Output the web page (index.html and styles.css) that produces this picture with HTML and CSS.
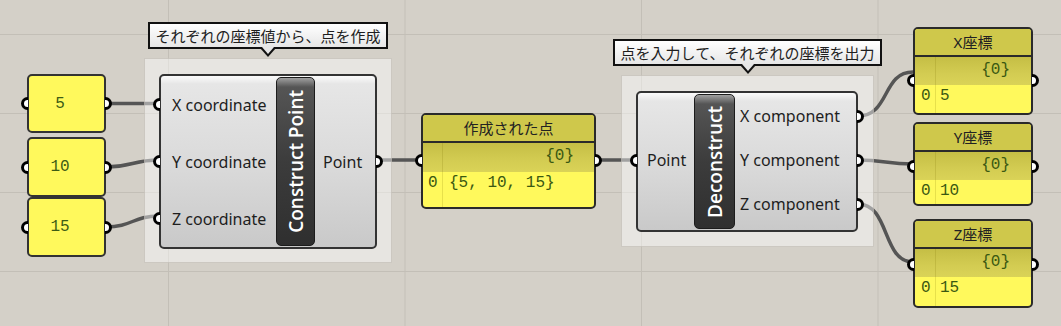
FILE: index.html
```html
<!DOCTYPE html>
<html lang="ja">
<head>
<meta charset="UTF-8">
<title>Construct / Deconstruct Point</title>
<link rel="stylesheet" href="styles.css">
</head>
<body>
<div class="canvas">

  <!-- wires -->
  <svg class="wires" width="1061" height="326" viewBox="0 0 1061 326">
    <g fill="none" stroke="#555" stroke-width="3.5">
      <path d="M106 103.5 C130 103.5, 135 103.5, 159 103.5"/>
      <path d="M106 167 C132 167, 133 160, 159 160"/>
      <path d="M106 227 C132 227, 133 216, 159 216"/>
      <path d="M377 160 L421 160"/>
      <path d="M596 160 L636 160"/>
      <path d="M858 116 C890 116, 882 72, 913 72"/>
      <path d="M858 160 C885 160, 886 164, 913 164"/>
      <path d="M858 204 C890 204, 882 262, 913 262"/>
    </g>
  </svg>

  <!-- number inputs -->
  <div class="node num n5"><span class="grip in"></span>5<span class="grip out"></span></div>
  <div class="node num n10"><span class="grip in"></span>10<span class="grip out"></span></div>
  <div class="node num n15"><span class="grip in"></span>15<span class="grip out"></span></div>

  <!-- construct point -->
  <div class="node group g1"></div>
  <div class="node tip t1">それぞれの座標値から、点を作成</div>
  <div class="node comp cpt">
    <div class="ports ins">
      <div class="port"><span class="grip in"></span>X coordinate</div>
      <div class="port"><span class="grip in"></span>Y coordinate</div>
      <div class="port"><span class="grip in"></span>Z coordinate</div>
    </div>
    <div class="strip"><span>Construct Point</span></div>
    <div class="ports outs">
      <div class="port">Point<span class="grip out"></span></div>
    </div>
  </div>

  <!-- result panel -->
  <div class="node panel pmain">
    <span class="grip in"></span>
    <div class="panel-title">作成された点</div>
    <div class="panel-head"><span class="idx"></span><span class="path">{0}</span></div>
    <div class="panel-row"><span class="idx">0</span><span class="val">{5, 10, 15}</span></div>
    <span class="grip out"></span>
  </div>

  <!-- deconstruct -->
  <div class="node group g2"></div>
  <div class="node tip t2">点を入力して、それぞれの座標を出力</div>
  <div class="node comp dec">
    <div class="ports ins">
      <div class="port"><span class="grip in"></span>Point</div>
    </div>
    <div class="strip"><span>Deconstruct</span></div>
    <div class="ports outs">
      <div class="port">X component<span class="grip out"></span></div>
      <div class="port">Y component<span class="grip out"></span></div>
      <div class="port">Z component<span class="grip out"></span></div>
    </div>
  </div>

  <!-- coordinate panels -->
  <div class="node panel small px">
    <span class="grip in"></span>
    <div class="panel-title">X座標</div>
    <div class="panel-head"><span class="idx"></span><span class="path">{0}</span></div>
    <div class="panel-row"><span class="idx">0</span><span class="val">5</span></div>
    <span class="grip out"></span>
  </div>
  <div class="node panel small py">
    <span class="grip in"></span>
    <div class="panel-title">Y座標</div>
    <div class="panel-head"><span class="idx"></span><span class="path">{0}</span></div>
    <div class="panel-row"><span class="idx">0</span><span class="val">10</span></div>
    <span class="grip out"></span>
  </div>
  <div class="node panel small pz">
    <span class="grip in"></span>
    <div class="panel-title">Z座標</div>
    <div class="panel-head"><span class="idx"></span><span class="path">{0}</span></div>
    <div class="panel-row"><span class="idx">0</span><span class="val">15</span></div>
    <span class="grip out"></span>
  </div>

</div>
</body>
</html>
```

FILE: styles.css
```css
body { margin: 0; font-family: "Noto Sans", "Noto Sans CJK JP", sans-serif; }

.canvas {
  position: relative; width: 1061px; height: 326px; overflow: hidden;
  background-color: #d4d0c8;
  background-image: linear-gradient(to right, #c3bfb7 1px, transparent 1px),
                    linear-gradient(to bottom, #c3bfb7 1px, transparent 1px);
  background-size: 236.5px 100%, 100% 79px;
  background-position: 168px 0, 0 34px;
}
.wires { position: absolute; left: 0; top: 0; }
.node { position: absolute; box-sizing: border-box; }

/* grips */
.grip { position: absolute; top: 50%; width: 4px; height: 7px; margin-top: -6.5px; border: 3px solid #000; background: #fff; z-index: 2; }
.grip.in { left: -8px; border-right: none; border-radius: 7px 0 0 7px; }
.grip.out { right: -8px; border-left: none; border-radius: 0 7px 7px 0; }

/* number boxes */
.num { width: 79px; background: #fff95c; border: 2px solid #333; border-radius: 5px;
  display: flex; align-items: center; justify-content: center; padding-right: 13px;
  font: 16px "Liberation Mono", monospace; color: #3d5c14; }
.n5 { left: 27px; top: 74px; height: 59px; }
.n10 { left: 27px; top: 137px; height: 60px; }
.n15 { left: 27px; top: 197px; height: 60px; }

/* groups + callouts */
.group { background: rgba(255,255,255,0.45); border: 1px solid rgba(170,165,155,0.45); }
.g1 { left: 144px; top: 58px; width: 248px; height: 205px; }
.g2 { left: 621px; top: 75px; width: 253px; height: 172px; }

.tip { height: 27px; border: 2px solid #111; background: linear-gradient(#ffffff, #e6e6e6);
  font-family: "Noto Sans CJK JP", sans-serif; font-size: 15px; line-height: 23px; text-align: center; color: #1e1e1e; }
.tip::before { content: ""; position: absolute; left: 50%; bottom: -10px; margin-left: -8px;
  border-left: 8px solid transparent; border-right: 8px solid transparent; border-top: 9px solid #111; }
.tip::after { content: ""; position: absolute; left: 50%; bottom: -7px; margin-left: -6px;
  border-left: 6px solid transparent; border-right: 6px solid transparent; border-top: 7px solid #e6e6e6; }
.t1 { left: 148px; top: 22px; width: 240px; }
.t2 { left: 613px; top: 39px; width: 269px; }

/* components */
.comp { display: flex; border: 2px solid #333; border-radius: 5px;
  background: linear-gradient(#fbfbfb 0, #e6e6e6 8px, #d9d9d9 55%, #c9c9c9 100%); }
.ports { display: flex; flex-direction: column; }
.port { flex: 1; position: relative; display: flex; align-items: center; font-size: 16px; color: #1e1e1e; white-space: nowrap; }
.strip { display: flex; align-items: center; justify-content: center; margin: 1px 0;
  border: 1px solid #1c1c1c; border-radius: 5px;
  background: linear-gradient(#a0a0a0 0, #555 9px, #3c3c3c 50%, #2f2f2f 100%); }
.strip span { writing-mode: vertical-rl; transform: rotate(180deg); color: #fff;
  font-family: "Open Sans", sans-serif; font-weight: 600; font-size: 19px; white-space: nowrap; }

.cpt { left: 159px; top: 74px; width: 218px; height: 175px; }
.cpt .ins { width: 115px; }
.cpt .ins .port { padding-left: 11px; }
.cpt .strip { width: 37px; }
.cpt .outs { flex: 1; }
.cpt .outs .port { padding-left: 8px; }

.dec { left: 636px; top: 91px; width: 222px; height: 141px; }
.dec .ports { padding: 1px 0 4px; }
.dec .ins { width: 56px; }
.dec .ins .port { padding-left: 9px; }
.dec .strip { width: 39px; }
.dec .outs { flex: 1; }
.dec .outs .port { padding-left: 5px; }

/* panels */
.panel { display: flex; flex-direction: column; border: 2px solid #2a2a2a; border-radius: 5px; background: #fff95c; }
.panel-title { height: 26px; line-height: 26px; text-align: center; background: #cfc84b;
  border-bottom: 2px solid #2a2a2a; border-radius: 3px 3px 0 0;
  font-family: "Noto Sans", "Noto Sans CJK JP", sans-serif; font-size: 15px; color: #222; }
.panel-head { height: 29px; display: flex; background: linear-gradient(#c5be45, #d3cc52 60%, #dad357); }
.panel-row { flex: 1; display: flex; border-radius: 0 0 3px 3px; }
.panel-head, .panel-row { font: 16px "Liberation Mono", monospace; color: #3a5812; }
.idx { width: 20px; box-sizing: border-box; padding-left: 5px; border-right: 1px solid rgba(120,110,0,0.18); }
.path { flex: 1; text-align: right; padding-right: 20px; line-height: 27px; }
.panel-row .idx, .val { line-height: 20px; padding-top: 1px; }
.val { padding-left: 6px; white-space: pre; }

.pmain { left: 421px; top: 113px; width: 175px; height: 96px; }
.small { width: 120px; }
.small .idx { width: 21px; padding-left: 6px; }
.small .val { padding-left: 4px; }
.small .panel-head { height: 28px; }
.small .path { padding-right: 21px; line-height: 26px; }
.px { left: 913px; top: 27px; height: 88px; }
.py { left: 913px; top: 122px; height: 84px; }
.pz { left: 913px; top: 219px; height: 89px; }
.panel > .grip.in, .panel > .grip.out { top: 45px; margin-top: 0; }
.pmain > .grip.in, .pmain > .grip.out { top: 39px; }
.py > .grip.in, .py > .grip.out { top: 36px; }
.pz > .grip.in, .pz > .grip.out { top: 37px; }
```
